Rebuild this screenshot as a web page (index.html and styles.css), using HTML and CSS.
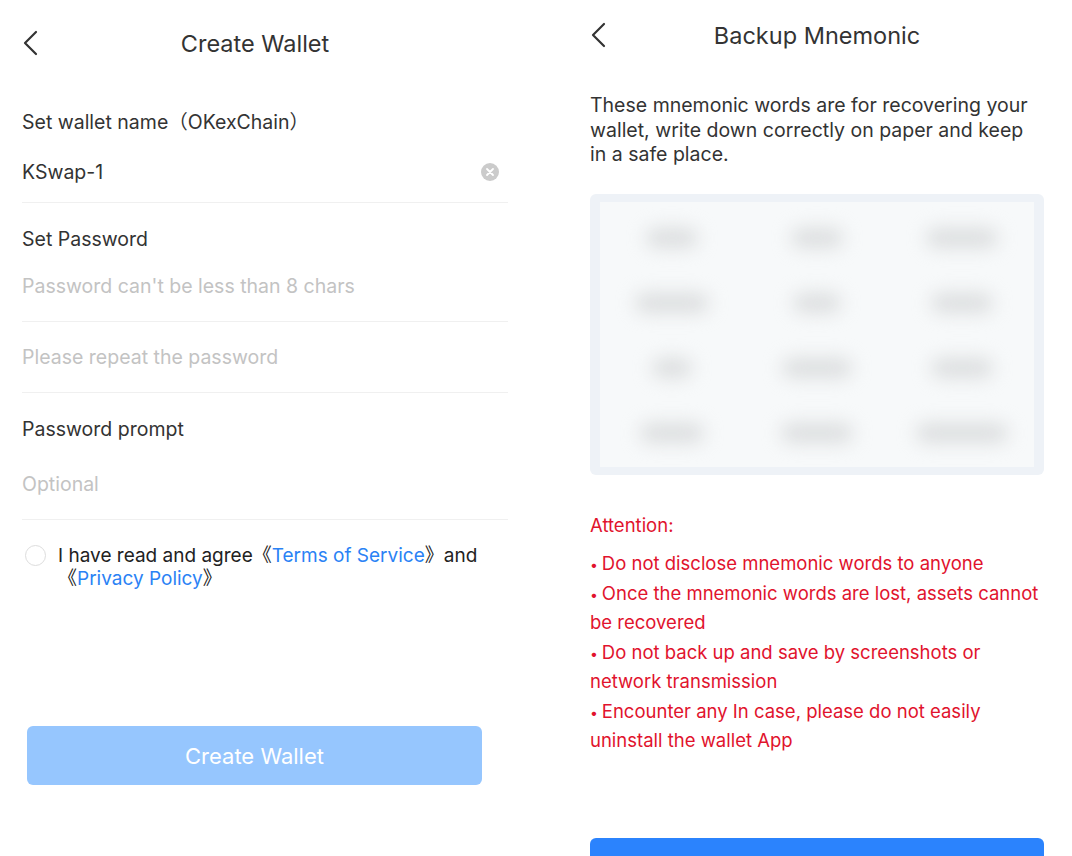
FILE: index.html
```html
<!DOCTYPE html>
<html lang="en">
<head>
  <meta charset="UTF-8" />
  <meta name="viewport" content="width=device-width, initial-scale=1.0"/>
  <title>Create Wallet / Backup Mnemonic</title>
  <link rel="stylesheet" href="styles.css">
</head>
<body>

<div class="screens">

  <!-- Create Wallet screen -->
  <section class="screen screen-create">
    <header class="topbar">
      <svg class="back" width="16" height="26" viewBox="0 0 16 26"><path d="M14 2 L3 13 L14 24" fill="none" stroke="#333" stroke-width="2.2" stroke-linecap="round" stroke-linejoin="round"/></svg>
      <h1 class="title title-create">Create Wallet</h1>
    </header>

    <div class="field-label">Set wallet name（OKexChain）</div>
    <div class="field-input input-name">
      <input type="text" value="KSwap-1" />
      <svg class="clear" width="20" height="20" viewBox="0 0 20 20"><circle cx="10" cy="10" r="9" fill="#cbcbcb"/><path d="M7 7 L13 13 M13 7 L7 13" stroke="#fff" stroke-width="1.8" stroke-linecap="round"/></svg>
    </div>

    <div class="field-label">Set Password</div>
    <div class="field-input">
      <input type="password" placeholder="Password can't be less than 8 chars" />
    </div>
    <div class="field-input">
      <input type="password" placeholder="Please repeat the password" />
    </div>

    <div class="field-label">Password prompt</div>
    <div class="field-input input-prompt">
      <input type="text" placeholder="Optional" />
    </div>

    <div class="agree">
      <span class="radio"></span>
      <p>I have read and agree《<a href="#">Terms of Service</a>》and 《<a href="#">Privacy Policy</a>》</p>
    </div>

    <button class="btn btn-disabled">Create Wallet</button>
  </section>

  <!-- Backup Mnemonic screen -->
  <section class="screen screen-backup">
    <header class="topbar topbar-backup">
      <svg class="back" width="16" height="26" viewBox="0 0 16 26"><path d="M14 2 L3 13 L14 24" fill="none" stroke="#333" stroke-width="2.2" stroke-linecap="round" stroke-linejoin="round"/></svg>
      <h1 class="title">Backup Mnemonic</h1>
    </header>

    <p class="intro">These mnemonic words are for recovering your wallet, write down correctly on paper and keep in a safe place.</p>

    <div class="words-box">
      <div class="words" id="words"></div>
    </div>

    <div class="attention">
      <p class="attention-title">Attention:</p>
      <ul>
        <li>Do not disclose mnemonic words to anyone</li>
        <li>Once the mnemonic words are lost, assets cannot be recovered</li>
        <li>Do not back up and save by screenshots or network transmission</li>
        <li>Encounter any In case, please do not easily uninstall the wallet App</li>
      </ul>
    </div>

    <button class="btn btn-primary">Backed up</button>
  </section>

</div>

<script>
  // blurred mnemonic placeholders (widths only, words are hidden)
  const widths = [52, 52, 72, 74, 48, 62, 40, 70, 62, 64, 72, 92];
  const words = document.getElementById('words');
  widths.forEach(w => {
    const cell = document.createElement('div');
    cell.className = 'word';
    cell.innerHTML = `<span style="width:${w}px"></span>`;
    words.appendChild(cell);
  });
</script>

</body>
</html>
```

FILE: styles.css
```css
body {
  margin: 0;
  background: #fff;
  font-family: Inter, "Noto Sans CJK SC", sans-serif;
  color: #333;
}

.screens {
  display: flex;
  justify-content: space-between;
  width: 1072px;
  height: 856px;
  overflow: hidden;
}

.screen {
  box-sizing: border-box;
  width: 510px;
}

.screen-create {
  width: 530px;
  padding: 0 22px;
}

.screen-backup {
  padding: 0 28px;
}

/* top bar */
.topbar {
  display: flex;
  align-items: center;
  height: 86px;
}

.topbar-backup {
  height: 70px;
}

.back {
  flex: none;
}

.title {
  flex: 1;
  margin: 0 16px 0 0;
  text-align: center;
  font-size: 23.5px;
  font-weight: 400;
  color: #333;
}

.title-create {
  margin-right: 36px;
}

/* form */
.field-label {
  padding-top: 24px;
  font-size: 19.5px;
  line-height: 24px;
}

.field-input {
  display: flex;
  align-items: center;
  padding: 23px 0;
  border-bottom: 1px solid #f0f0f0;
}

.input-name {
  padding-top: 26px;
  padding-bottom: 18px;
}

.input-prompt {
  padding-top: 31px;
}

.field-input input {
  flex: 1;
  height: 24px;
  padding: 0;
  border: none;
  outline: none;
  font-family: inherit;
  font-size: 19.5px;
  line-height: 24px;
  color: #333;
  background: transparent;
}

.field-input input::placeholder {
  color: #c3c3c3;
}

.clear {
  flex: none;
  margin-right: 8px;
}

.agree {
  display: flex;
  align-items: flex-start;
  margin-top: 24px;
}

.radio {
  flex: none;
  box-sizing: border-box;
  width: 21px;
  height: 21px;
  margin: 1px 12px 0 3px;
  border: 1.5px solid #ddd;
  border-radius: 50%;
}

.agree p {
  margin: 0;
  font-size: 19px;
  line-height: 23px;
  color: #222;
}

.agree a {
  color: #2a82f5;
  text-decoration: none;
}

/* buttons */
.btn {
  display: block;
  width: 100%;
  height: 59px;
  border: none;
  border-radius: 6px;
  font-family: inherit;
  font-size: 22px;
  color: #fff;
}

.btn-disabled {
  width: 455px;
  margin: 136px 0 0 5px;
  background: #96c6fe;
}

.btn-primary {
  margin-top: 82px;
  background: #2b83fd;
}

/* backup */
.intro {
  margin: 23px 0 0;
  font-size: 19.5px;
  line-height: 24.5px;
  color: #333;
}

.words-box {
  margin-top: 27px;
  padding: 8px 10px;
  background: #eef2f7;
  border-radius: 6px;
}

.words {
  display: grid;
  grid-template-columns: repeat(3, 1fr);
  grid-auto-rows: 65px;
  height: 265px;
  box-sizing: border-box;
  padding-top: 4px;
  background: #f7f9fa;
  overflow: hidden;
}

.word {
  display: flex;
  align-items: center;
  justify-content: center;
}

.word span {
  height: 20px;
  border-radius: 10px;
  background: #dcdedf;
  filter: blur(9px);
}

.attention {
  margin-top: 36px;
  color: #e1132d;
  font-size: 18.5px;
}

.attention-title {
  margin: 0 0 9px;
  line-height: 29.5px;
}

.attention ul {
  margin: 0;
  padding: 0;
  list-style: none;
}

.attention li {
  line-height: 29.5px;
}

.attention li::before {
  content: "• ";
  font-size: 14px;
  line-height: 1;
}
```
